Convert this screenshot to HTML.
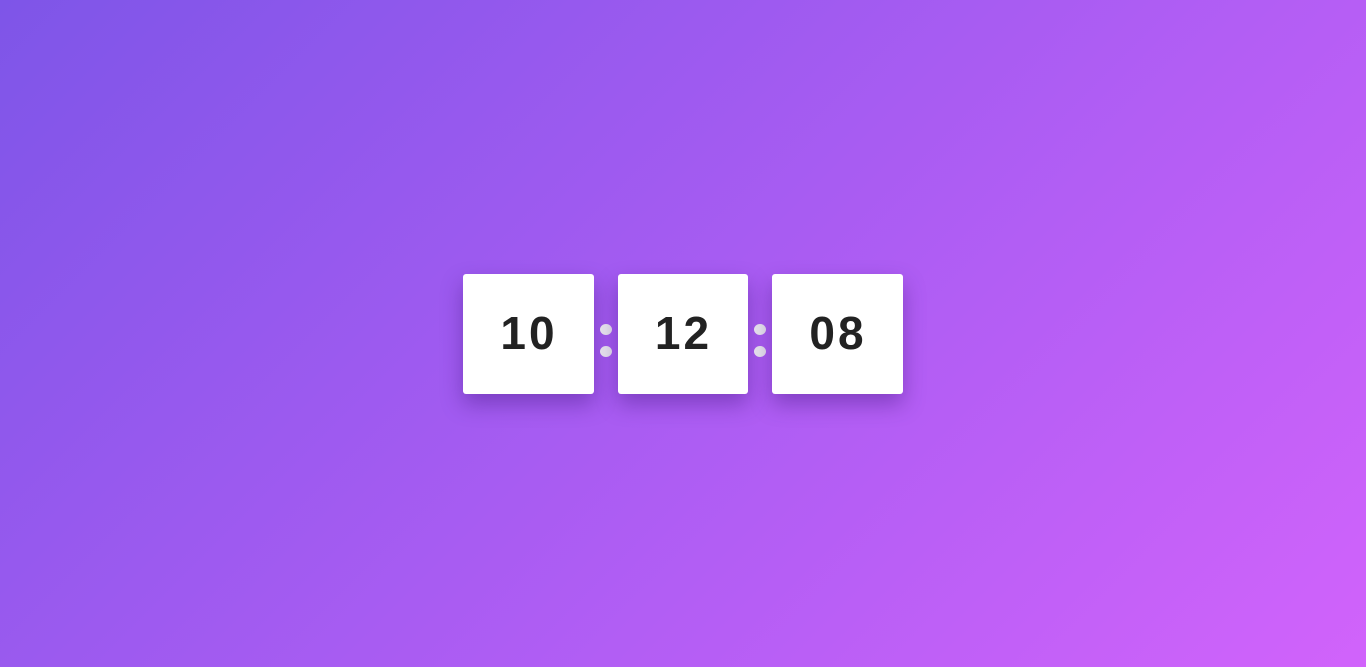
<!DOCTYPE html>
<html><head><style>
html,body{margin:0;width:1366px;height:667px;overflow:hidden}
body{background:linear-gradient(135deg,#7e55e8 0%,#a85cf2 50%,#d163fb 100%);font-family:"Liberation Sans",sans-serif;position:relative}
.b{position:absolute;top:274px;width:131px;height:120px;background:#fff;border-radius:3px;box-shadow:0 10px 22px rgba(60,20,120,.4);display:flex;align-items:center;justify-content:center;font-weight:bold;font-size:46px;color:#222;letter-spacing:3px;padding-left:1px;padding-bottom:2px;box-sizing:border-box}
.d{position:absolute;width:12px;height:11px;border-radius:50%;background:#e6e2ec}
</style></head><body>
<div class="b" style="left:463px">10</div>
<div class="d" style="left:600px;top:324px"></div><div class="d" style="left:600px;top:346px"></div>
<div class="b" style="left:618px;width:130px">12</div>
<div class="d" style="left:754px;top:324px"></div><div class="d" style="left:754px;top:346px"></div>
<div class="b" style="left:772px">08</div>
</body></html>
